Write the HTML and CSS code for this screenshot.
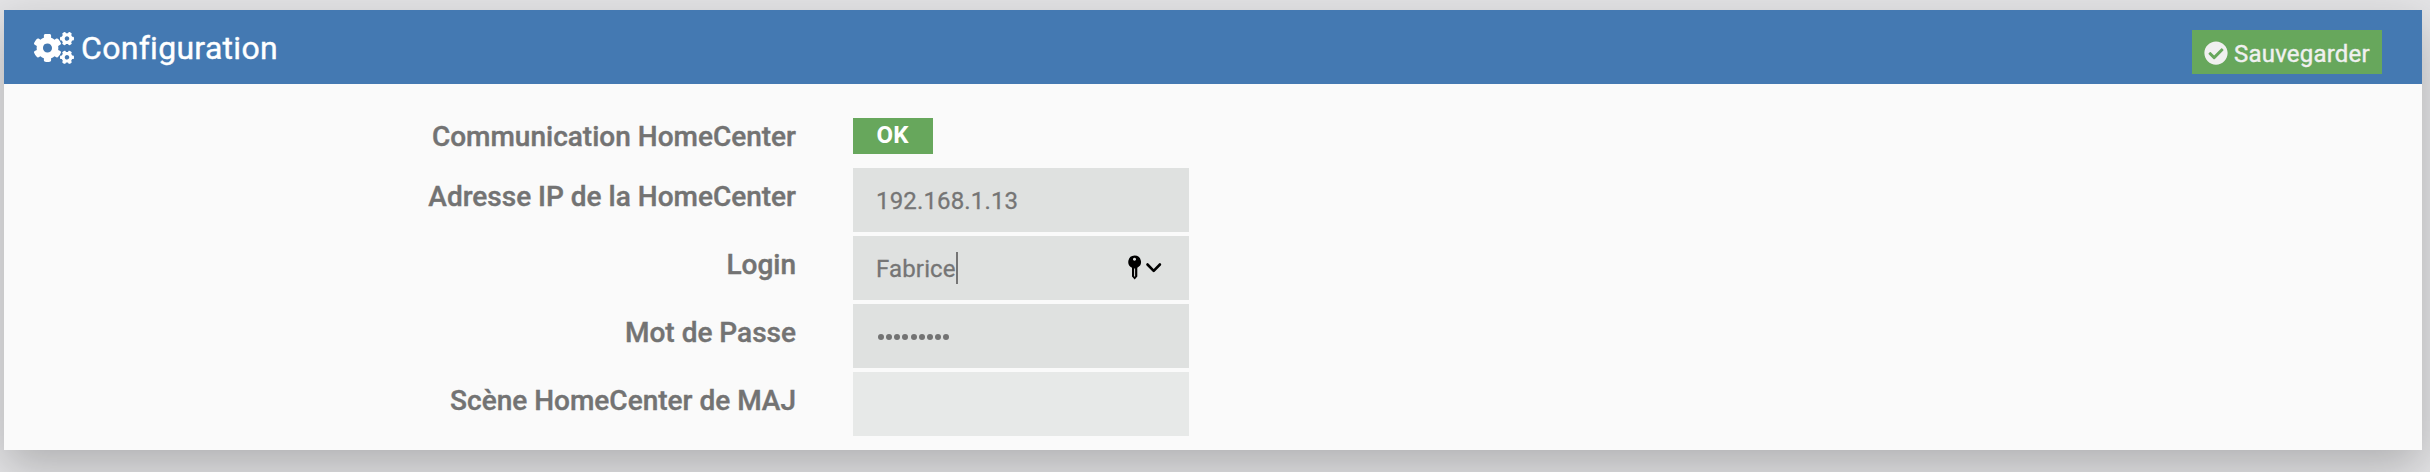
FILE: index.html
```
<!DOCTYPE html>
<html lang="fr">
<head>
<meta charset="utf-8">
<title>Configuration</title>
<link rel="stylesheet" href="styles.css">
</head>
<body>
<section class="panel">
  <header class="panel-heading">
    <h3 class="panel-title">
      <svg class="icon-cogs" viewBox="0 0 640 512" aria-hidden="true">
        <defs>
          <path id="small-cog" d="M512.1 191l-8.2 14.3c-3 5.3-9.4 7.5-15.1 5.4-11.8-4.4-22.6-10.7-32.1-18.6-4.6-3.8-5.8-10.5-2.8-15.7l8.2-14.3c-6.9-8-12.3-17.3-15.9-27.4h-16.5c-6 0-11.2-4.3-12.2-10.3-2-12-2.1-24.6 0-37.1 1-6 6.2-10.4 12.2-10.4h16.5c3.6-10.1 9-19.4 15.9-27.4l-8.2-14.3c-3-5.2-1.9-11.9 2.8-15.7 9.5-7.9 20.4-14.2 32.1-18.6 5.7-2.1 12.1.1 15.1 5.4l8.2 14.3c10.5-1.9 21.2-1.9 31.7 0L552 6.3c3-5.3 9.4-7.5 15.1-5.4 11.8 4.4 22.6 10.7 32.1 18.6 4.6 3.8 5.8 10.5 2.8 15.7l-8.2 14.3c6.9 8 12.3 17.3 15.9 27.4h16.5c6 0 11.2 4.3 12.2 10.3 2 12 2.1 24.6 0 37.1-1 6-6.2 10.4-12.2 10.4h-16.5c-3.6 10.1-9 19.4-15.9 27.4l8.2 14.3c3 5.2 1.9 11.9-2.8 15.7-9.5 7.9-20.4 14.2-32.1 18.6-5.7 2.1-12.1-.1-15.1-5.4l-8.2-14.3c-10.4 1.9-21.2 1.9-31.7 0zm-10.5-58.8c38.5 29.6 82.4-14.3 52.8-52.8-38.5-29.7-82.4 14.3-52.8 52.8z"/>
        </defs>
        <use href="#small-cog"/>
        <use href="#small-cog" y="298.9"/>
        <path d="M386.3 286.1l33.7 16.8c10.1 5.8 14.5 18.1 10.5 29.1-8.9 24.2-26.4 46.4-42.6 65.8-7.4 8.9-20.2 11.1-30.3 5.3l-29.1-16.8c-16 13.7-34.6 24.6-54.9 31.7v33.6c0 11.6-8.3 21.6-19.7 23.6-24.6 4.2-50.4 4.4-75.9 0-11.5-2-20-11.9-20-23.6V418c-20.3-7.2-38.9-18-54.9-31.7L74 403c-10 5.8-22.9 3.6-30.3-5.3-16.2-19.4-33.3-41.6-42.2-65.7-4-10.9.4-23.2 10.5-29.1l33.3-16.8c-3.9-20.9-3.9-42.4 0-63.4L12 205.8c-10.1-5.8-14.6-18.1-10.5-29 8.9-24.2 26-46.4 42.2-65.8 7.4-8.9 20.2-11.1 30.3-5.3l29.1 16.8c16-13.7 34.6-24.6 54.9-31.7V57.1c0-11.5 8.2-21.5 19.6-23.5 24.6-4.2 50.5-4.4 76-.1 11.5 2 20 11.9 20 23.6v33.6c20.3 7.2 38.9 18 54.9 31.7l29.1-16.8c10-5.8 22.9-3.6 30.3 5.3 16.2 19.4 33.2 41.6 42.1 65.8 4 10.9.1 23.2-10 29.1l-33.7 16.8c3.9 21 3.9 42.5 0 63.5zm-117.6 21.1c59.2-77-28.7-164.9-105.7-105.7-59.2 77 28.7 164.9 105.7 105.7z"/>
      </svg>
      <span>Configuration</span>
    </h3>
    <button class="btn-save" type="button">
      <svg class="icon-check" viewBox="0 0 512 512" aria-hidden="true">
        <path d="M504 256c0 136.967-111.033 248-248 248S8 392.967 8 256 119.033 8 256 8s248 111.033 248 248zM227.314 387.314l184-184c6.248-6.248 6.248-16.379 0-22.627l-22.627-22.627c-6.248-6.249-16.379-6.249-22.628 0L216 308.118l-70.059-70.059c-6.248-6.248-16.379-6.248-22.628 0l-22.627 22.627c-6.248 6.248-6.248 16.379 0 22.627l104 104c6.249 6.249 16.379 6.249 22.628.001z"/>
      </svg>
      <span>Sauvegarder</span>
    </button>
  </header>
  <div class="panel-body">
    <div class="row row-status">
      <span class="label">Communication HomeCenter</span>
      <span class="badge">OK</span>
    </div>
    <div class="row">
      <span class="label">Adresse IP de la HomeCenter</span>
      <div class="field"><span>192.168.1.13</span></div>
    </div>
    <div class="row">
      <span class="label">Login</span>
      <div class="field">
        <span>Fabrice</span><i class="caret"></i>
        <svg class="icon-key" viewBox="0 0 34 26" aria-hidden="true">
          <path fill-rule="evenodd" d="M6.500 0.500a6.400 6.400 0 0 1 2.800 12.200V21.500L6.700 24.500L4 21.500V12.700A6.400 6.400 0 0 1 6.500 0.500zM6.500 2.800a1.500 1.500 0 1 0 .01 0zM6.100 13.500V21.500h1V13.500z"/>
          <path class="chevron" d="M19.500 9.500L25.700 15.900L31.900 9.500"/>
        </svg>
      </div>
    </div>
    <div class="row">
      <span class="label">Mot de Passe</span>
      <div class="field">
        <span class="dots"><i></i><i></i><i></i><i></i><i></i><i></i><i></i><i></i><i></i></span>
      </div>
    </div>
    <div class="row">
      <span class="label">Scène HomeCenter de MAJ</span>
      <div class="field field-empty"></div>
    </div>
  </div>
</section>
</body>
</html>
```
FILE: styles.css
```
* { box-sizing: border-box; }
body {
  margin: 0;
  height: 472px;
  overflow: hidden;
  padding: 10px 8px 22px 4px;
  background: #e4e4e6;
  font-family: Roboto, "Liberation Sans", sans-serif;
}
.panel {
  height: 440px;
  background: #fafafa;
  box-shadow: 0 17px 44px rgba(0, 0, 0, .23);
}
.panel-heading {
  display: flex;
  justify-content: space-between;
  align-items: flex-start;
  height: 74px;
  padding: 20px 40px 0 30px;
  background: #4479b2;
  color: #fff;
}
.panel-title {
  display: flex;
  align-items: center;
  gap: 7px;
  margin: 0;
  font-size: 32px;
  line-height: 36px;
  font-weight: 400;
  letter-spacing: .3px;
  -webkit-text-stroke: .4px currentColor;
}
.icon-cogs { width: 40px; height: 32px; fill: currentColor; }
.btn-save {
  display: flex;
  align-items: center;
  gap: 6px;
  width: 190px;
  height: 44px;
  padding: 2px 0 0 12px;
  border: 0;
  background: #67a75c;
  color: #f0f0f0;
  font: 400 24px/40px Roboto, "Liberation Sans", sans-serif;
  letter-spacing: .2px;
  -webkit-text-stroke: .4px currentColor;
}
.btn-save span { padding-top: 2px; }
.icon-check { flex: none; width: 24px; height: 24px; fill: currentColor; }
.panel-body {
  display: flex;
  flex-direction: column;
  gap: 4px;
  padding-top: 34px;
}
.row {
  display: grid;
  grid-template-columns: 792px 336px;
  column-gap: 57px;
  height: 64px;
}
.row-status { height: 46px; }
.label {
  padding-top: 13px;
  color: #737373;
  font-size: 28px;
  line-height: 32px;
  font-weight: 500;
  text-align: right;
  white-space: nowrap;
  -webkit-text-stroke: .4px currentColor;
}
.row-status .label { padding-top: 3px; }
.badge {
  width: 80px;
  height: 36px;
  padding-right: 1px;
  background: #67a75c;
  color: #fff;
  font-size: 24px;
  line-height: 35px;
  font-weight: 700;
  text-align: center;
}
.field {
  display: flex;
  align-items: center;
  padding: 0 27px 0 23px;
  background: #dfe1e0;
  color: #757575;
  font-size: 24px;
  letter-spacing: .15px;
  -webkit-text-stroke: .3px currentColor;
}
.field > span { padding-top: 1px; }
.field-empty { background: #e7e9e8; }
.caret { width: 2px; height: 32px; background: #757575; }
.icon-key { width: 34px; height: 26px; margin-left: auto; }
.chevron {
  fill: none;
  stroke: #000;
  stroke-width: 2.6;
  stroke-linecap: round;
  stroke-linejoin: round;
}
.field > .dots { display: flex; gap: 2.14px; padding: 2px 0 0 2px; }
.dots i { width: 6px; height: 6px; border-radius: 50%; background: #737373; }
```
